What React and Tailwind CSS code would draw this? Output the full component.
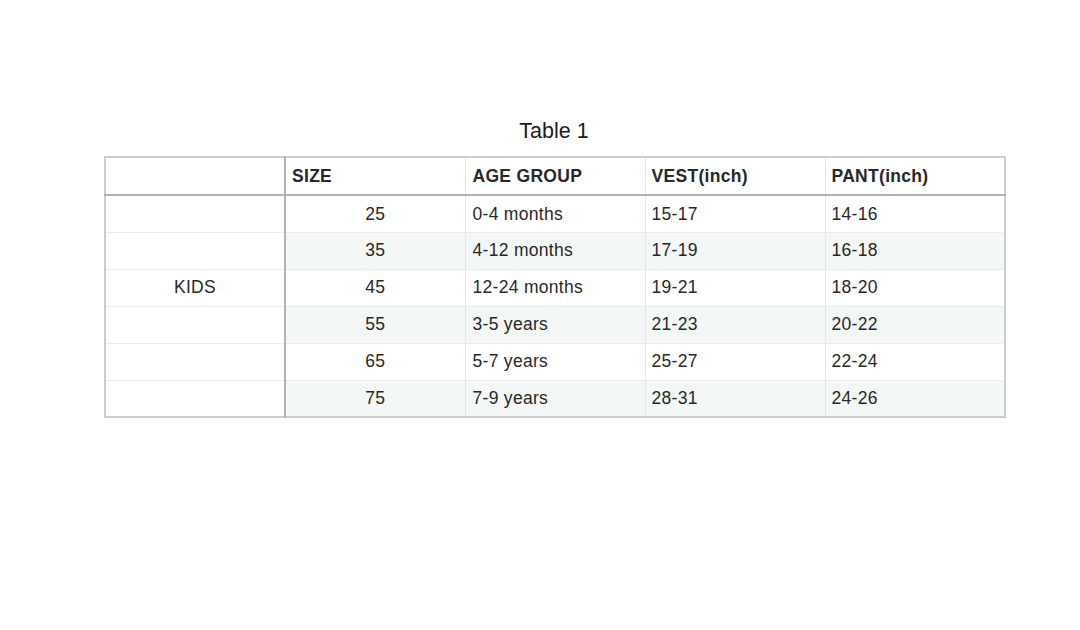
import React from "react";

const rows = [
  ["25", "0-4 months", "15-17", "14-16"],
  ["35", "4-12 months", "17-19", "16-18"],
  ["45", "12-24 months", "19-21", "18-20"],
  ["55", "3-5 years", "21-23", "20-22"],
  ["65", "5-7 years", "25-27", "22-24"],
  ["75", "7-9 years", "28-31", "24-26"],
];

export default function App() {
  return (
    <div
      className="w-[1080px] h-[630px] bg-white text-[#282828]"
      style={{ fontFamily: '"Liberation Sans", Arial, sans-serif' }}
    >
      <div className="ml-[104px] w-[900px] pt-[117px]">
        <h1 className="text-[21.5px] leading-[28px] text-center text-[#1c1c1c] mb-[11px]">
          Table 1
        </h1>
        <table className="w-[900px] table-fixed border-collapse border-2 border-[#cdcdcd] text-[17.5px] tracking-[0.3px]">
          <thead>
            <tr className="h-[38px] border-b-2 border-[#b3b3b3]">
              <th className="w-[180px] border-r-2 border-[#b3b3b3]"></th>
              <th className="w-[180px] text-left font-bold pl-[6px] border-r border-[#e6e6e6]">SIZE</th>
              <th className="w-[180px] text-left font-bold pl-[7px] border-r border-[#e6e6e6]">AGE GROUP</th>
              <th className="w-[180px] text-left font-bold pl-[6px] border-r border-[#e6e6e6]">VEST(inch)</th>
              <th className="w-[180px] text-left font-bold pl-[6px]">PANT(inch)</th>
            </tr>
          </thead>
          <tbody>
            {rows.map((r, i) => (
              <tr key={r[0]} className="h-[37px] border-b border-[#ebebeb]">
                <td className="border-r-2 border-[#b3b3b3] text-center bg-white">
                  {i === 2 ? "KIDS" : ""}
                </td>
                <td className={"text-center border-r border-[#e6e6e6] " + (i % 2 ? "bg-[#f3f8f6]" : "bg-white")}>
                  {r[0]}
                </td>
                <td className={"pl-[7px] border-r border-[#e6e6e6] " + (i % 2 ? "bg-[#f3f8f6]" : "bg-white")}>
                  {r[1]}
                </td>
                <td className={"pl-[6px] border-r border-[#e6e6e6] " + (i % 2 ? "bg-[#f3f8f6]" : "bg-white")}>
                  {r[2]}
                </td>
                <td className={"pl-[6px] " + (i % 2 ? "bg-[#f3f8f6]" : "bg-white")}>
                  {r[3]}
                </td>
              </tr>
            ))}
          </tbody>
        </table>
      </div>
    </div>
  );
}
